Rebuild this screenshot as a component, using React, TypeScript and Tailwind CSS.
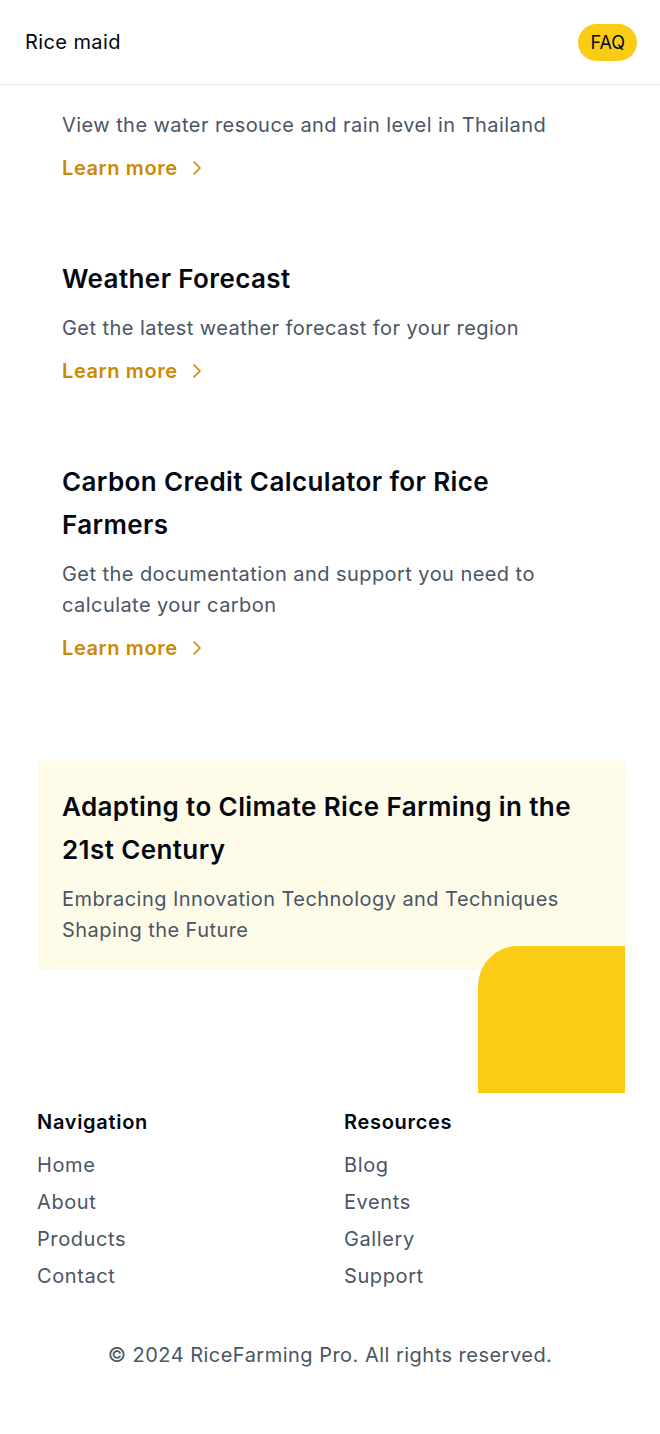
import { ChevronRight } from "lucide-react";

interface Feature {
    title?: string;
    description: string;
}

const features: Feature[] = [
    { description: "View the water resouce and rain level in Thailand" },
    { title: "Weather Forecast", description: "Get the latest weather forecast for your region" },
    {
        title: "Carbon Credit Calculator for Rice Farmers",
        description: "Get the documentation and support you need to calculate your carbon",
    },
];

const navigation = ["Home", "About", "Products", "Contact"];
const resources = ["Blog", "Events", "Gallery", "Support"];

const FeatureCard = ({ title, description }: Feature) => {
    return (
        <div className="flex flex-col">
            {title && (
                <h3 className="text-[26px] leading-[43px] font-semibold tracking-[0.015em] text-gray-950 mb-[13px]">
                    {title}
                </h3>
            )}
            <p className="text-[20px] leading-[31px] tracking-[0.022em] text-gray-600">{description}</p>
            <a href="#" className="mt-3 flex items-center gap-[7px] text-[20px] leading-[30px] font-semibold tracking-[0.03em] text-[#ca8a04]">
                Learn more
                <ChevronRight size={24} strokeWidth={1.75} />
            </a>
        </div>
    );
};

const App = () => {
    return (
        <div className="min-h-[1434px] bg-white" style={{ fontFamily: "Inter, 'Noto Sans', sans-serif" }}>
            <header className="h-[85px] flex items-center justify-between pl-[25px] pr-[23px] border-b border-gray-200">
                <span className="text-[20px] tracking-[0.02em] text-gray-950">Rice maid</span>
                <button className="h-[37px] px-[12px] rounded-full bg-[#facc15] text-[18px] text-gray-950">
                    FAQ
                </button>
            </header>

            <main className="px-[62px] pt-[25px] flex flex-col gap-[74px]">
                {features.map((item) => (
                    <FeatureCard key={item.description} {...item} />
                ))}
            </main>

            <section className="relative ml-[37px] mr-[35px] mt-[98px] bg-[#fefce8] px-[25px] py-[24px]">
                <h2 className="text-[26px] leading-[43px] font-semibold tracking-[0.015em] text-gray-950 pr-6">
                    Adapting to Climate Rice Farming in the 21st Century
                </h2>
                <p className="mt-[13px] text-[20px] leading-[31px] tracking-[0.022em] text-gray-600 pr-6">
                    Embracing Innovation Technology and Techniques Shaping the Future
                </p>
                <div className="absolute right-0 top-[185px] w-[147px] h-[147px] bg-[#facc15] rounded-tl-[40px]" />
            </section>

            <footer className="mt-[138px] px-[37px]">
                <div className="grid grid-cols-[307px_1fr]">
                    <div className="flex flex-col">
                        <h4 className="text-[20px] leading-[28px] font-semibold tracking-[0.035em] text-gray-950 mb-[11px]">Navigation</h4>
                        {navigation.map((link) => (
                            <a key={link} href="#" className="text-[20px] leading-[37px] tracking-[0.03em] text-gray-600">
                                {link}
                            </a>
                        ))}
                    </div>
                    <div className="flex flex-col">
                        <h4 className="text-[20px] leading-[28px] font-semibold tracking-[0.035em] text-gray-950 mb-[11px]">Resources</h4>
                        {resources.map((link) => (
                            <a key={link} href="#" className="text-[20px] leading-[37px] tracking-[0.03em] text-gray-600">
                                {link}
                            </a>
                        ))}
                    </div>
                </div>
                <p className="mt-[45px] text-center text-[20px] leading-[30px] tracking-[0.024em] text-gray-600">
                    © 2024 RiceFarming Pro. All rights reserved.
                </p>
            </footer>
        </div>
    );
};

export default App;
